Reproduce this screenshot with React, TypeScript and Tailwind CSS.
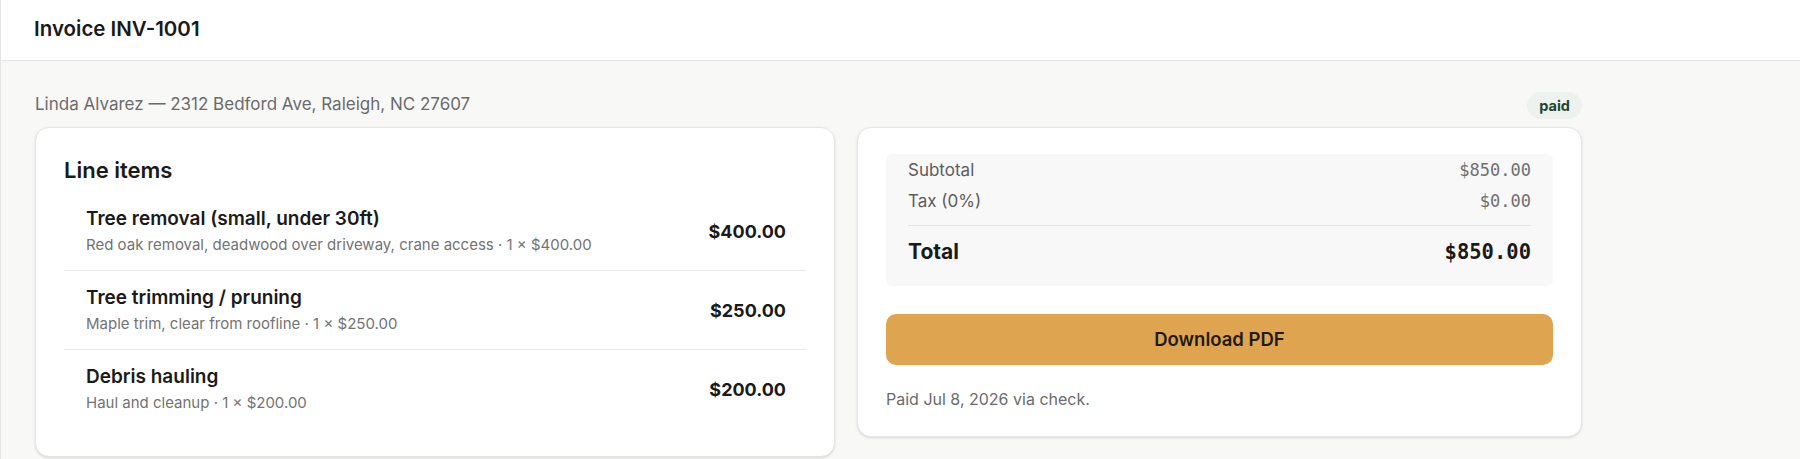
const items = [
  {
    name: 'Tree removal (small, under 30ft)',
    detail: 'Red oak removal, deadwood over driveway, crane access · 1 × $400.00',
    amount: '$400.00',
  },
  {
    name: 'Tree trimming / pruning',
    detail: 'Maple trim, clear from roofline · 1 × $250.00',
    amount: '$250.00',
  },
  {
    name: 'Debris hauling',
    detail: 'Haul and cleanup · 1 × $200.00',
    amount: '$200.00',
  },
];

const sans = "font-['Inter','Noto_Sans',sans-serif]";
const mono = "font-['DejaVu_Sans_Mono',monospace]";

export default function App() {
  return (
    <div className={`min-h-[459px] bg-[#f8f8f7] border-l border-[#e5e5e5] text-[#1a1a1a] ${sans}`}>
      <header className="h-[61px] bg-white border-b border-[#e5e5e5] px-[33px] pt-4">
        <h1 className="text-[20.5px] leading-[26px] font-semibold">Invoice INV-1001</h1>
      </header>

      <main className="pl-[34px] pt-[31px]">
        <div className="max-w-[1547px]">
          <div className="flex items-end justify-between">
            <p className="mb-1 text-[17px] leading-[22px] text-[#6b6b6b]">
              Linda Alvarez — 2312 Bedford Ave, Raleigh, NC 27607
            </p>
            <span className="h-[27px] flex items-center rounded-full bg-[#edf2ee] px-[12px] text-[14.5px] font-bold text-[#22452e]">
              paid
            </span>
          </div>

          <div className="mt-2 grid grid-cols-[800px_1fr] gap-[22px] items-start">
            <section className="rounded-[14px] border border-[#e6e6e6] bg-white p-7 shadow-sm">
              <h2 className="text-[22px] leading-7 font-semibold">Line items</h2>
              <ul className="mt-2">
                {items.map((it, i) => (
                  <li
                    key={it.name}
                    className={`flex items-center justify-between pl-5.5 pr-5 py-3.5 ${
                      i < items.length - 1 ? 'border-b border-[#ebebeb]' : ''
                    }`}
                  >
                    <div>
                      <div className="text-[19px] leading-[26px] font-semibold">{it.name}</div>
                      <div className="mt-0.5 text-[15px] leading-[22px] text-[#737373]">{it.detail}</div>
                    </div>
                    <div className="text-[18px] font-bold">{it.amount}</div>
                  </li>
                ))}
              </ul>
            </section>

            <section className="rounded-[14px] border border-[#e6e6e6] bg-white px-7 pt-[26px] pb-[26px] shadow-sm">
              <div className="rounded-md bg-[#f8f8f8] px-5.5 pt-px pb-2">
                <div className="h-[31px] flex items-center justify-between text-[17px] text-[#5c5c5c]">
                  <span>Subtotal</span>
                  <span className={`${mono} text-[17px] text-[#707070]`}>$850.00</span>
                </div>
                <div className="h-[31px] flex items-center justify-between text-[17px] text-[#5c5c5c]">
                  <span>Tax (0%)</span>
                  <span className={`${mono} text-[17px] text-[#707070]`}>$0.00</span>
                </div>
                <div className="mt-2 h-px bg-[#e5e5e5]" />
                <div className="flex items-center justify-between py-3.5 leading-6">
                  <span className="text-[21px] font-bold">Total</span>
                  <span className={`${mono} text-[20.5px] font-bold`}>$850.00</span>
                </div>
              </div>

              <button className="mt-7 h-[51px] w-full rounded-[10px] bg-[#dfa44f] text-[18.5px] font-semibold text-[#1f1a14]">
                Download PDF
              </button>

              <p className="mt-[23px] text-[16px] leading-[22px] text-[#6b6b6b]">Paid Jul 8, 2026 via check.</p>
            </section>
          </div>
        </div>
      </main>
    </div>
  );
}
